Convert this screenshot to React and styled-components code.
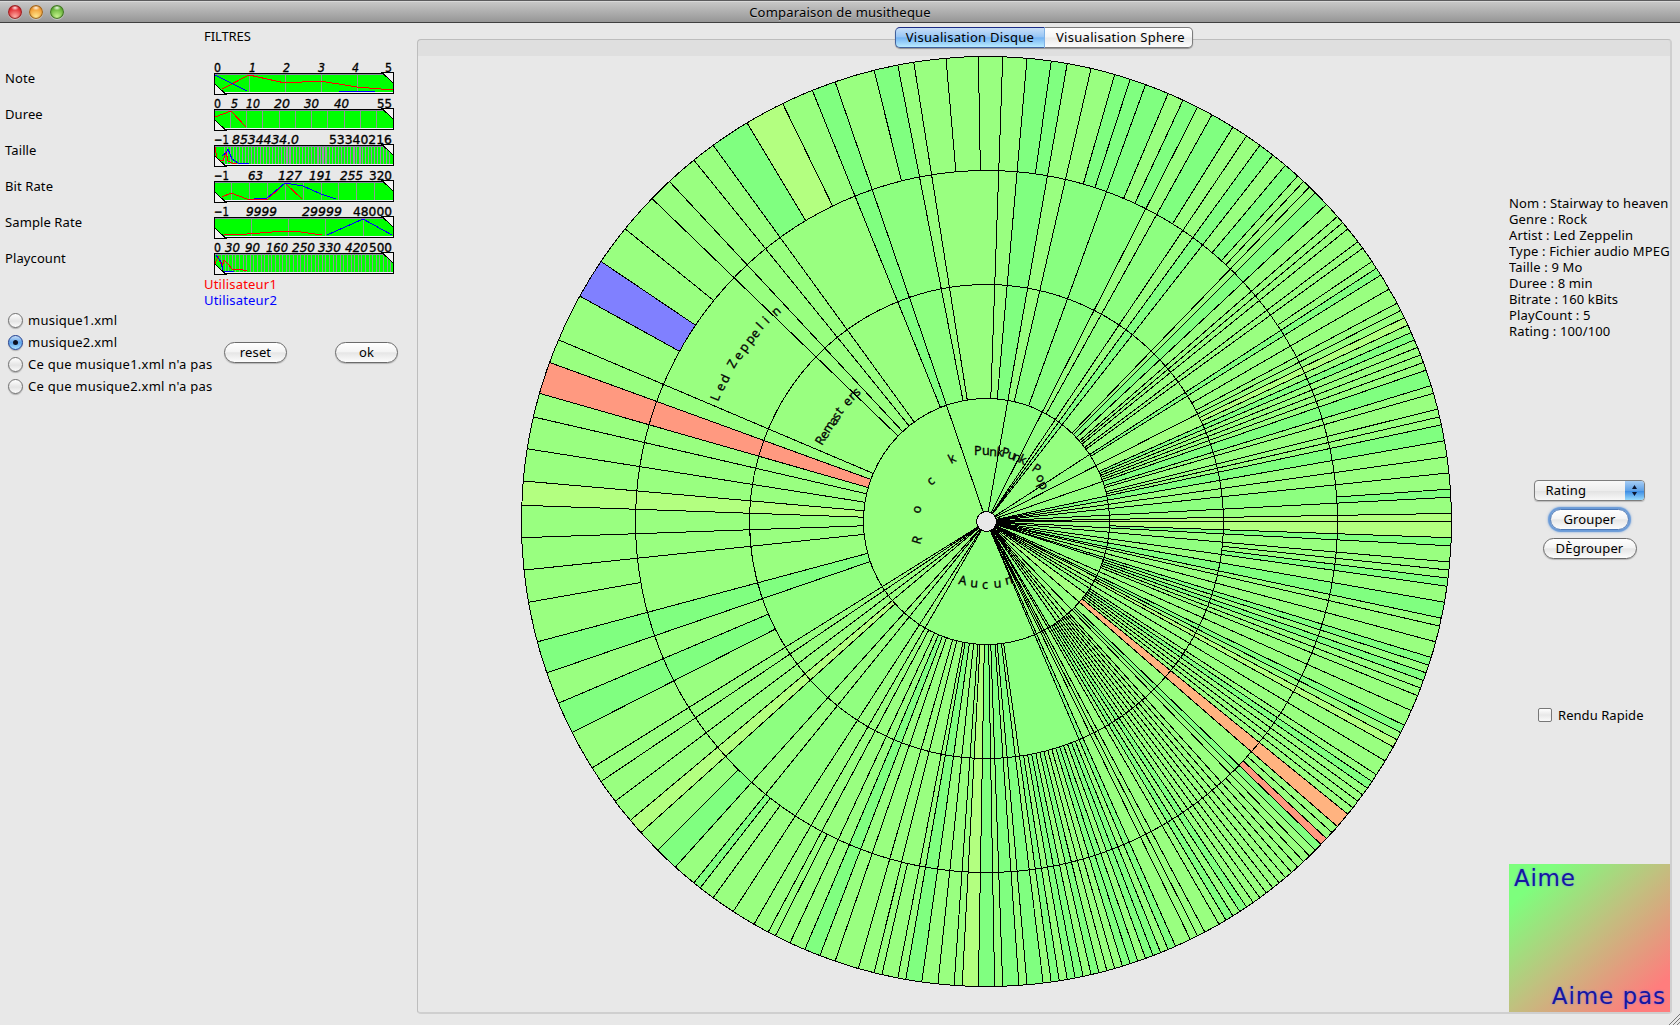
import React from "react";
import styled, { createGlobalStyle, css } from "styled-components";

const UI_FONT = '"Noto Sans", "Open Sans", sans-serif';

const GlobalStyle = createGlobalStyle`
  html, body { margin: 0; padding: 0; }
  body { background: #e8e8e8; font-family: ${UI_FONT}; font-size: 13px; color: #000; overflow: hidden; }
  * { box-sizing: border-box; }
`;

/* ---------- window chrome ---------- */

const Window = styled.div`
  width: 1680px;
  height: 1025px;
  display: flex;
  flex-direction: column;
  background: #e8e8e8;
`;

const TitleBar = styled.header`
  height: 23px;
  flex: none;
  display: grid;
  grid-template-columns: 1fr auto 1fr;
  align-items: center;
  padding: 1px 8px 0;
  border-top: 1px solid #5b5b5d;
  border-bottom: 1px solid #404040;
  background: linear-gradient(#c9c9c9, #969696);
  box-shadow: inset 0 1px 0 #d8d8d8;
`;

const Lights = styled.div`
  display: flex;
  gap: 7px;
`;

const Light = styled.span`
  width: 14px;
  height: 14px;
  border-radius: 50%;
  background:
    radial-gradient(ellipse 4px 2.5px at 50% 20%, rgba(255, 255, 255, 0.9), rgba(255, 255, 255, 0) 100%),
    radial-gradient(circle at 50% 85%, ${(p) => p.$glow}, ${(p) => p.$tone} 65%);
  box-shadow: inset 0 0 1px 1px ${(p) => p.$rim}, 0 1px 0 rgba(255, 255, 255, 0.4);
`;

const Title = styled.h1`
  margin: 0;
  font-size: 13px;
  font-weight: 400;
  line-height: 18px;
  letter-spacing: 0.2px;
  text-shadow: 0 1px 0 rgba(255, 255, 255, 0.35);
`;

const Body = styled.main`
  flex: 1;
  min-height: 0;
  display: flex;
`;

/* ---------- filter column ---------- */

const Sidebar = styled.aside`
  width: 417px;
  flex: none;
  display: flex;
  flex-direction: column;
`;

const Heading = styled.div`
  height: 37px;
  padding: 5px 0 0 204px;
  line-height: 17px;
  letter-spacing: -0.1px;
`;

const FilterRow = styled.div`
  height: 36px;
  display: flex;
`;

const FilterName = styled.label`
  width: 214px;
  padding: 9px 0 0 5px;
  line-height: 18px;
  letter-spacing: 0.1px;
`;

const UserKey = styled.div`
  height: 16px;
  line-height: 16px;
  padding-left: 204px;
  letter-spacing: 0.2px;
  color: ${(p) => p.$tone};
`;

const Controls = styled.div`
  display: flex;
  padding: 1px 0 0 8px;
`;

const RadioList = styled.div`
  width: 216px;
  display: flex;
  flex-direction: column;
`;

const RadioRow = styled.label`
  height: 22px;
  display: flex;
  align-items: center;
  gap: 5px;
  line-height: 18px;
  letter-spacing: 0.24px;
  white-space: nowrap;
`;

const RadioDot = styled.span`
  width: 15px;
  height: 15px;
  flex: none;
  border-radius: 50%;
  display: flex;
  align-items: center;
  justify-content: center;
  border: 1px solid #707070;
  background: linear-gradient(#ffffff, #e4e4e4 55%, #fbfbfb);
  box-shadow: 0 1px 1px rgba(0, 0, 0, 0.25);
  ${(p) =>
    p.$on &&
    css`
      border-color: #1d3c8f;
      background: linear-gradient(#c6dcf6, #5ea3ea 50%, #a9e2ff);
      &::after {
        content: "";
        width: 5px;
        height: 5px;
        border-radius: 50%;
        background: #0c1020;
      }
    `}
`;

const ButtonPair = styled.div`
  display: flex;
  gap: 48px;
  padding-top: 33px;
`;

const PushButton = styled.button`
  width: ${(p) => p.$width}px;
  height: 21px;
  padding: 0 0 1px;
  font: 13px/18px ${UI_FONT};
  letter-spacing: 0.15px;
  color: #000;
  border: 1px solid #6b6b6b;
  border-radius: 11px;
  background: linear-gradient(#ffffff, #f4f4f4 45%, #e6e6e6 52%, #fcfcfc);
  box-shadow: 0 1px 1px rgba(0, 0, 0, 0.22);
  ${(p) =>
    p.$focused &&
    css`
      border-color: #4c79b8;
      box-shadow: 0 0 1px 2px #6a9bd8, 0 0 3px 2px rgba(90, 145, 215, 0.5);
    `}
`;

/* ---------- tab area ---------- */

const TabArea = styled.section`
  flex: 1;
  min-width: 0;
  display: flex;
  flex-direction: column;
  padding: 4px 8px 11px 0;
`;

const Tabs = styled.nav`
  align-self: center;
  height: 21px;
  display: flex;
  z-index: 1;
  margin-right: 1px;
  margin-bottom: -9px;
  border-radius: 5px;
  box-shadow: 0 1px 1px rgba(0, 0, 0, 0.35);
`;

const Tab = styled.button`
  width: ${(p) => p.$width}px;
  padding: 0 0 1px;
  padding-left: ${(p) => p.$inset || 0}px;
  font: 13px/18px ${UI_FONT};
  letter-spacing: 0.29px;
  white-space: nowrap;
  border: 1px solid #7b7b7b;
  color: #000;
  border-radius: 0 5px 5px 0;
  border-left: 0;
  background: linear-gradient(#ffffff, #f5f5f5 48%, #e9e9e9 52%, #fdfdfd);
  ${(p) =>
    p.$active &&
    css`
      border: 1px solid #40609c;
      border-top-color: #1c2c86;
      border-right-color: #7fb2e6;
      border-radius: 5px 0 0 5px;
      background: linear-gradient(#c8dff8, #98c6f5 46%, #76b4f3 52%, #b9ebff);
    `}
`;

const Panel = styled.div`
  flex: 1;
  min-height: 0;
  display: flex;
  border: 1px solid #bdbdbd;
  border-right: 2px solid #cfcfcf;
  border-bottom: 2px solid #cfcfcf;
  border-radius: 4px;
  background: linear-gradient(#dfdfdf 16px, #e8e8e8 16px);
`;

const DiscHolder = styled.div`
  width: 1091px;
  flex: none;
  padding: 15px 0 0 102px;
`;

const Info = styled.div`
  flex: 1;
  display: flex;
  flex-direction: column;
`;

const Details = styled.div`
  padding-top: 155px;
  height: 440px;
  font-size: 13px;
  line-height: 16px;
  letter-spacing: 0.14px;
  white-space: nowrap;
  overflow: hidden;
`;

const DetailLine = styled.div`
  height: 16px;
`;

const Actions = styled.div`
  display: flex;
  flex-direction: column;
  align-items: center;
  gap: 8px;
  height: 227px;
`;

const Select = styled.div`
  width: 111px;
  height: 21px;
  display: flex;
  border: 1px solid #7d7d7d;
  border-radius: 4px;
  overflow: hidden;
  margin-right: 1px;
  background: linear-gradient(#f8f8f8, #ededed 50%, #e2e2e2 52%, #f8f8f8);
  box-shadow: 0 1px 1px rgba(0, 0, 0, 0.2);
`;

const SelectText = styled.span`
  flex: 1;
  padding-left: 11px;
  line-height: 18px;
  letter-spacing: 0.2px;
`;

const SelectArrows = styled.span`
  width: 20px;
  margin: -1px -1px -1px 0;
  display: flex;
  align-items: center;
  justify-content: center;
  border-top: 1px solid #2a3b9a;
  background: linear-gradient(#a7cdf5, #5b9fe6 50%, #3f8ee4 52%, #a0e2ff);
`;

const CheckRow = styled.label`
  display: flex;
  align-items: center;
  gap: 6px;
  height: 18px;
  padding-left: 29px;
  margin-bottom: 140px;
  letter-spacing: 0.05px;
`;

const CheckBox = styled.span`
  width: 14px;
  height: 14px;
  border: 1px solid #777;
  border-radius: 2px;
  background: linear-gradient(#ffffff, #e8e8e8 50%, #fafafa);
`;

const Legend = styled.div`
  width: 161px;
  height: 148px;
  display: flex;
  flex-direction: column;
  justify-content: space-between;
  padding: 0 4px 2px 5px;
  font: 23px/28px "DejaVu Sans", sans-serif;
  color: #1616a0;
  text-shadow: 0 0 2px rgba(90, 110, 255, 0.7);
  background: linear-gradient(137deg, #7dff7d 14%, #c2bf7f 50%, #ff7d7d 88%);
`;

const LegendWord = styled.span`
  align-self: ${(p) => p.$side};
  letter-spacing: ${(p) => p.$track}px;
`;

const GripRow = styled.div`
  height: 0;
  display: flex;
  justify-content: flex-end;
  align-items: flex-end;
`;

/* ---------- range filters ---------- */

const grid = (from, step, to) => {
  const out = [];
  for (let x = from; x < to; x += step) out.push(x);
  return out;
};

const FILTERS = [
  {
    name: "Note",
    ticks: [["0", 0, 7], ["1", 35, 7, 1], ["2", 69, 7, 1], ["3", 104, 7, 1], ["4", 138, 7, 1], ["5", 171, 7]],
    bars: [35, 71, 107, 143],
    red: "8,29 35,15 71,23 106,21 143,27 179,30",
    blue: "1,15 33,31",
    blue2: "125,31 161,31",
  },
  {
    name: "Duree",
    ticks: [["0", 0, 7], ["5", 17, 7, 1], ["10", 32, 14, 1], ["20", 60, 16, 1], ["30", 90, 15, 1], ["40", 120, 15, 1], ["55", 163, 15]],
    bars: [16, 32, 48, 65, 81, 97, 113, 130, 146, 162],
    red: "1,21 17,15 32,31",
  },
  {
    name: "Taille",
    ticks: [["−1", 0, 15], ["8534434.0", 18, 67, 1], ["53340216", 115, 63]],
    bars: [...grid(10, 3, 178), 69.5, 71.5, 75, 104, 105.5, 108, 111, 140, 142, 146, 147.5],
    tint: "#a08cb0",
    red: "1,15 3,27 9,29 12,20 14,29 18,31 23,31",
    blue: "8,24 12,21 14,17 18,27 24,31 35,31",
  },
  {
    name: "Bit Rate",
    ticks: [["−1", 0, 15], ["63", 34, 15, 1], ["127", 64, 24, 1], ["191", 95, 23, 1], ["255", 126, 23, 1], ["320", 155, 23]],
    bars: [17, 35, 53, 71, 89, 107, 124, 142, 160],
    red: "8,29 17,25 33,31 54,31 71,15 88,31",
    blue: "40,31 53,30 71,15 89,18 107,26 122,31",
  },
  {
    name: "Sample Rate",
    ticks: [["−1", 0, 15], ["9999", 32, 31, 1], ["29999", 88, 40, 1], ["48000", 139, 39]],
    bars: [37, 74, 111, 149],
    red: "10,31 33,30 71,27 80,27 108,31",
    blue: "113,31 149,15 178,31",
  },
  {
    name: "Playcount",
    ticks: [["0", 0, 7], ["30", 11, 15, 1], ["90", 31, 15, 1], ["160", 52, 22, 1], ["250", 78, 23, 1], ["330", 104, 23, 1], ["420", 131, 23, 1], ["500", 155, 23]],
    bars: grid(7, 3.6, 178),
    red: "1,24 4,16 8,27 10,20 15,25 18,29 25,29 33,31",
    blue: "2,15 7,22 9,31 20,31",
  },
];

function RangeFilter({ spec }) {
  return (
    <svg width="182" height="36" viewBox="0 0 182 36">
      <g fontFamily='"DejaVu Sans", sans-serif' fontSize="12.500" stroke="#000" strokeWidth="0.35">
        {spec.ticks.map(([label, x, width, italic]) => (
          <text
            key={label}
            x={x}
            y="12"
            textLength={width}
            lengthAdjust="spacingAndGlyphs"
            fontStyle={italic ? "italic" : "normal"}
          >
            {label}
          </text>
        ))}
      </g>
      <g shapeRendering="crispEdges">
        <rect x="0" y="13" width="180" height="21" fill="#000" />
        <rect x="1" y="14" width="178" height="19" fill="#f4f4ff" />
        <rect x="1" y="14" width="178" height="1" fill="#8888a0" />
        <rect x="1" y="15" width="178" height="17" fill="#00ff00" />
        {spec.bars.map((x) => (
          <rect key={x} x={x} y="15" width="1" height="17" fill={spec.tint || "#8c9c94"} />
        ))}
        {spec.red && <polyline points={spec.red} fill="none" stroke="#f00" />}
        {spec.blue && <polyline points={spec.blue} fill="none" stroke="#00f" />}
        {spec.blue2 && <polyline points={spec.blue2} fill="none" stroke="#00f" />}
        <path d="M0.500 23.500V34.500H12Z" fill="#f2f2f2" stroke="#000" />
        <path d="M168 12.500H179.500V23.500Z" fill="#f2f2f2" stroke="#000" />
      </g>
    </svg>
  );
}

/* ---------- sunburst ---------- */

// Each entry: clockwise bearing in degrees, innermost ring the line reaches, tone of the slice after it.
const SLICES = `
2 1 g|5 1 t|8 3 t|10 0 g|13 1 g|16 3 t|18 3 t|20 1 t|23 3 g|25 3 t|27 0 g|29 1 t|32 3 g|34 0 g|36 0 t|38 0 g|
40 3 t|42 3 g|43 3 g|44 1 g|45 1 t|47 1 g|49 1 g|50 1 g|51 1 g|53 1 g|54 1 g|56 3 g|57 0 t|58 1 g|60 2 g|62 2 g|
63 0 g|64 2 y|65 2 g|66 1 t|67 1 g|68 1 g|69 1 g|70 1 g|71 0 t|73 1 g|74 1 g|76 1 g|77 1 g|78 0 t|80 0 g|82 0 g|
84 0 g|86 3 t|87 0 g|89 0 y|90 0 y|92 1 t|93 0 g|95 0 g|96 2 g|97 2 t|98 0 g|100 0 t|102 0 g|103 0 g|105 0 g|
107 0 t|108 0 g|109 1 t|110 1 g|111 1 g|112 1 g|114 0 g|116 0 t|117 0 g|118 1 y|119 0 g|121 0 g|123 0 g|124 1 t|
125 1 g|126 0 g|127 1 g|128 1 g|129 1 o|131 0 g|132 3 g|133 3 r|134 1 t|135 1 g|136 0 g|137 3 g|138 1 g|139 0 g|
140 1 g|141 0 g|142 1 g|143 0 g|144 1 g|145 0 g|146 1 t|147 1 g|148 1 t|149 0 g|150 0 g|152 0 g|153 0 g|154 0 g|
156 0 t|157 0 g|158 2 t|159 2 t|160 2 g|161 2 t|162 2 t|163 2 g|164 2 g|165 2 g|166 2 t|167 2 g|168 2 t|169 2 t|
170 2 g|171 2 t|172 1 g|173 1 t|175 1 g|176 1 t|178 1 g|179 1 t|181 1 y|183 1 g|184 1 g|186 1 g|188 1 t|190 1 g|
191 1 g|193 3 g|194 1 g|196 1 g|199 1 g|201 1 t|203 1 g|205 1 g|207 3 g|208 1 g|210 0 g|213 0 g|216 3 g|218 3 t|
219 0 g|222 0 t|225 3 g|228 1 y|230 0 g|233 0 g|236 0 g|238 0 g|243 2 t|247 2 g|251 1 t|255 1 g|260 3 g|264 1 g|
268 1 g|272 1 y|275 1 g|279 1 g|283 1 g|286 1 r|290 1 g|293 1 g|299 3 b|304 3 g|309 3 g|314 1 g|317 1 g|321 1 g|
324 1 t|329 3 y|334 3 g|338 1 t|341 0 g|346 3 t|349 1 g|351 1 g|355 3 g|359 3 g
`
  .replace(/\s*\n\s*/g, "")
  .split("|")
  .filter(Boolean)
  .map((entry) => {
    const [at, level, tone] = entry.split(" ");
    return { at: Number(at), level: Number(level), tone };
  });

const SCORE = { t: 0, g: 0.1, y: 0.2, o: 0.8, r: 0.9 };
// Disliked slices weigh less when a group's tone is averaged.
const GROUP_SCORE = { ...SCORE, o: 0.3 };
const RADII = [10, 123, 237, 351, 465];
const C = 466.5;

const toneOf = (score) =>
  score <= 0.5
    ? `rgb(${Math.round(128 + score * 254)},255,128)`
    : `rgb(255,${Math.round(255 - (score - 0.5) * 254)},128)`;

const point = (radius, bearing) => {
  const a = (bearing * Math.PI) / 180;
  return [C + radius * Math.sin(a), C - radius * Math.cos(a)];
};

const cellPath = (r0, r1, from, to) => {
  const large = to - from > 180 ? 1 : 0;
  return `M${point(r0, from)}L${point(r1, from)}A${r1} ${r1} 0 ${large} 1 ${point(r1, to)}L${point(r0, to)}A${r0} ${r0} 0 ${large} 0 ${point(r0, from)}Z`;
};

function buildCells() {
  const cells = [];
  for (let ring = 0; ring < 4; ring += 1) {
    const starts = SLICES.map((s, i) => (s.level <= ring ? i : -1)).filter((i) => i >= 0);
    starts.forEach((start, k) => {
      const next = starts[(k + 1) % starts.length];
      const leaves = [];
      for (let i = start; ; i = (i + 1) % SLICES.length) {
        leaves.push(SLICES[i].tone);
        if ((i + 1) % SLICES.length === next) break;
      }
      let fill;
      if (leaves.length === 1) {
        fill = leaves[0] === "b" ? "#8080ff" : toneOf(SCORE[leaves[0]]);
      } else {
        const scores = leaves.filter((t) => t !== "r" && t !== "b").map((t) => GROUP_SCORE[t]);
        fill = toneOf(scores.reduce((a, b) => a + b, 0) / scores.length);
      }
      const from = SLICES[start].at;
      let to = SLICES[next].at;
      if (to <= from) to += 360;
      cells.push({ key: `${ring}-${from}`, d: cellPath(RADII[ring], RADII[ring + 1], from, to), fill });
    });
  }
  return cells;
}

const CELLS = buildCells();

// Letters set one by one: glyph, x, y, rotation.
const LETTERS = [
  ["R", 400, 490, -74], ["o", 400, 459, -78], ["c", 411, 431, -40], ["k", 431, 409, -28],
  ["P", 454, 400, 0], ["u", 462, 400, 0], ["n", 469, 401, 3], ["k", 476, 401, 6],
  ["P", 481, 401, 12], ["u", 487, 403, 16], ["n", 492, 405, 20], ["k", 498, 407, 24],
  ["P", 511, 415, 35], ["o", 515, 423, 48], ["p", 518, 429, 62],
  ["A", 438, 529, 10], ["u", 450, 532, 5], ["c", 462, 534, 0], ["u", 474, 533, -5], ["n", 486, 530, -14],
  ["L", 198, 347, -68], ["e", 203, 337, -66], ["d", 207, 329, -64], ["Z", 214, 314, -60],
  ["e", 220, 306, -57], ["p", 225, 298, -54], ["p", 231, 290, -52], ["e", 236, 284, -50],
  ["l", 242, 275, -48], ["i", 248, 269, -46], ["n", 256, 262, -42],
  ["R", 302, 391, -60], ["e", 306, 385, -58], ["m", 309, 379, -58], ["a", 315, 371, -54],
  ["s", 318, 366, -54], ["t", 321, 360, -50], ["e", 328, 352, -46], ["r", 333, 346, -44], ["s", 337, 342, -42],
];

function Disc() {
  return (
    <svg width="933" height="933" viewBox="0 0 933 933">
      <g shapeRendering="crispEdges" stroke="none">
        {CELLS.map((cell) => (
          <path key={cell.key} d={cell.d} fill={cell.fill} />
        ))}
      </g>
      <g shapeRendering="crispEdges" stroke="#000" fill="none">
        {RADII.slice(1).map((r) => (
          <circle key={r} cx={C} cy={C} r={r} />
        ))}
        {SLICES.map(({ at, level }) => {
          const [x1, y1] = point(RADII[level], at);
          const [x2, y2] = point(RADII[4], at);
          return <line key={at} x1={x1} y1={y1} x2={x2} y2={y2} />;
        })}
        <circle cx={C} cy={C} r="10" fill="#e8e8e8" />
      </g>
      <g fontFamily='"Noto Sans", sans-serif' fontSize="12.500" fill="#000" stroke="#000" strokeWidth="0.3">
        {LETTERS.map(([glyph, x, y, turn], i) => (
          <text key={i} transform={`translate(${x} ${y}) rotate(${turn})`}>
            {glyph}
          </text>
        ))}
      </g>
    </svg>
  );
}

/* ---------- page ---------- */

const SOURCES = ["musique1.xml", "musique2.xml", "Ce que musique1.xml n'a pas", "Ce que musique2.xml n'a pas"];

const DETAILS = [
  "Nom : Stairway to heaven",
  "Genre : Rock",
  "Artist : Led Zeppelin",
  "Type : Fichier audio MPEG",
  "Taille : 9 Mo",
  "Duree : 8 min",
  "Bitrate : 160 kBits",
  "PlayCount : 5",
  "Rating : 100/100",
];

export default function App() {
  return (
    <Window>
      <GlobalStyle />
      <TitleBar>
        <Lights>
          <Light $tone="#e0262c" $glow="#ffb0a8" $rim="#8a2020" />
          <Light $tone="#f09a30" $glow="#ffe890" $rim="#8f5a1c" />
          <Light $tone="#62b034" $glow="#c8f590" $rim="#3b6a22" />
        </Lights>
        <Title>Comparaison de musitheque</Title>
      </TitleBar>
      <Body>
        <Sidebar>
          <Heading>FILTRES</Heading>
          {FILTERS.map((spec) => (
            <FilterRow key={spec.name}>
              <FilterName>{spec.name}</FilterName>
              <RangeFilter spec={spec} />
            </FilterRow>
          ))}
          <UserKey $tone="#ff0000">Utilisateur1</UserKey>
          <UserKey $tone="#0000ff">Utilisateur2</UserKey>
          <Controls>
            <RadioList>
              {SOURCES.map((name, i) => (
                <RadioRow key={name}>
                  <RadioDot $on={i === 1} />
                  {name}
                </RadioRow>
              ))}
            </RadioList>
            <ButtonPair>
              <PushButton $width={63}>reset</PushButton>
              <PushButton $width={63}>ok</PushButton>
            </ButtonPair>
          </Controls>
        </Sidebar>
        <TabArea>
          <Tabs>
            <Tab $width={150} $active>
              Visualisation Disque
            </Tab>
            <Tab $width={148} $inset={4}>
              Visualisation Sphere
            </Tab>
          </Tabs>
          <Panel>
            <DiscHolder>
              <Disc />
            </DiscHolder>
            <Info>
              <Details>
                {DETAILS.map((line) => (
                  <DetailLine key={line}>{line}</DetailLine>
                ))}
              </Details>
              <Actions>
                <Select>
                  <SelectText>Rating</SelectText>
                  <SelectArrows>
                    <svg width="7" height="13" viewBox="0 0 7 13">
                      <path d="M1 5L3.500 1L6 5ZM1 8L3.500 12L6 8Z" fill="#0a1530" />
                    </svg>
                  </SelectArrows>
                </Select>
                <PushButton $width={79} $focused>
                  Grouper
                </PushButton>
                <PushButton $width={94}>DÈgrouper</PushButton>
              </Actions>
              <CheckRow>
                <CheckBox />
                Rendu Rapide
              </CheckRow>
              <Legend>
                <LegendWord $side="flex-start" $track={0.7}>
                  Aime
                </LegendWord>
                <LegendWord $side="flex-end" $track={0.95}>
                  Aime pas
                </LegendWord>
              </Legend>
            </Info>
          </Panel>
        </TabArea>
      </Body>
      <GripRow>
        <svg width="12" height="12" viewBox="0 0 12 12">
          <path d="M1 12L12 1M5 12L12 5M9 12L12 9" stroke="#777" fill="none" />
        </svg>
      </GripRow>
    </Window>
  );
}
